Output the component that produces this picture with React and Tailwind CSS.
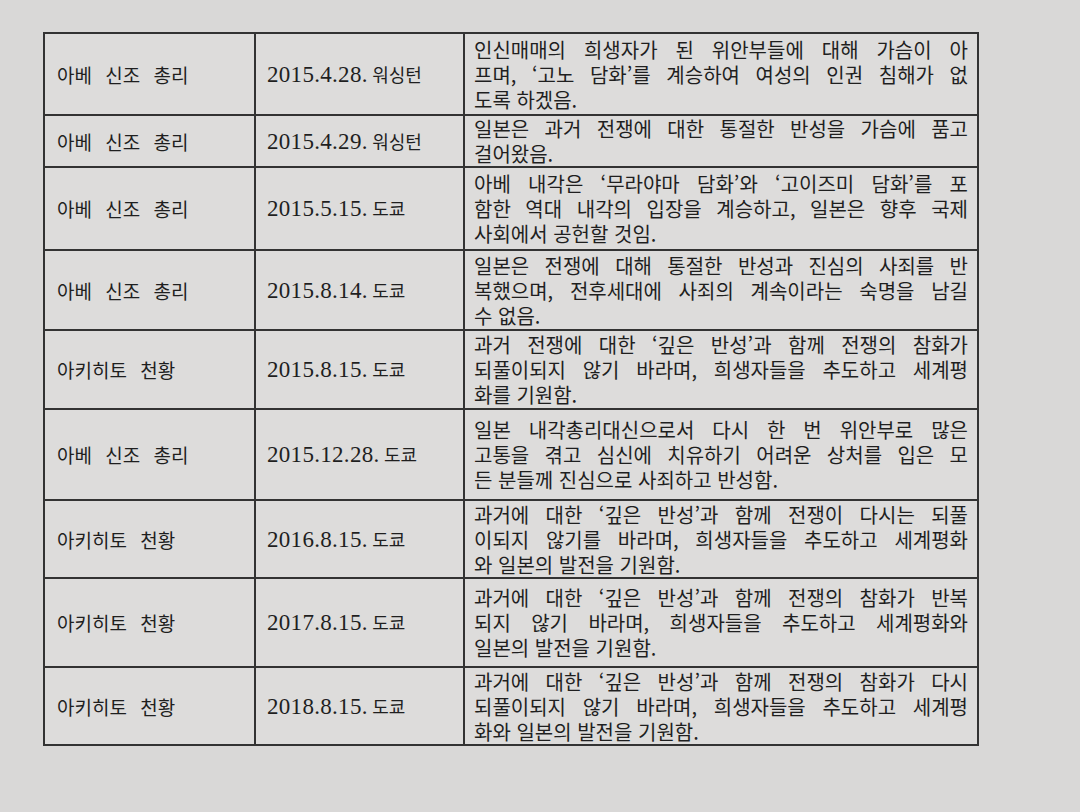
const rows = [
  {
    who: '아베 신조 총리',
    date: '2015.4.28.',
    place: '워싱턴',
    h: 'h-[82px]',
    lines: [
      '인신매매의 희생자가 된 위안부들에 대해 가슴이 아',
      '프며, ‘고노 담화’를 계승하여 여성의 인권 침해가 없',
      '도록 하겠음.',
    ],
  },
  {
    who: '아베 신조 총리',
    date: '2015.4.29.',
    place: '워싱턴',
    h: 'h-[52px]',
    lines: ['일본은 과거 전쟁에 대한 통절한 반성을 가슴에 품고', '걸어왔음.'],
  },
  {
    who: '아베 신조 총리',
    date: '2015.5.15.',
    place: '도쿄',
    h: 'h-[83px]',
    lines: [
      '아베 내각은 ‘무라야마 담화’와 ‘고이즈미 담화’를 포',
      '함한 역대 내각의 입장을 계승하고, 일본은 향후 국제',
      '사회에서 공헌할 것임.',
    ],
  },
  {
    who: '아베 신조 총리',
    date: '2015.8.14.',
    place: '도쿄',
    h: 'h-[80px]',
    lines: [
      '일본은 전쟁에 대해 통절한 반성과 진심의 사죄를 반',
      '복했으며, 전후세대에 사죄의 계속이라는 숙명을 남길',
      '수 없음.',
    ],
  },
  {
    who: '아키히토 천황',
    date: '2015.8.15.',
    place: '도쿄',
    h: 'h-[79px]',
    lines: [
      '과거 전쟁에 대한 ‘깊은 반성’과 함께 전쟁의 참화가',
      '되풀이되지 않기 바라며, 희생자들을 추도하고 세계평',
      '화를 기원함.',
    ],
  },
  {
    who: '아베 신조 총리',
    date: '2015.12.28.',
    place: '도쿄',
    h: 'h-[91px]',
    lines: [
      '일본 내각총리대신으로서 다시 한 번 위안부로 많은',
      '고통을 겪고 심신에 치유하기 어려운 상처를 입은 모',
      '든 분들께 진심으로 사죄하고 반성함.',
    ],
  },
  {
    who: '아키히토 천황',
    date: '2016.8.15.',
    place: '도쿄',
    h: 'h-[78px]',
    lines: [
      '과거에 대한 ‘깊은 반성’과 함께 전쟁이 다시는 되풀',
      '이되지 않기를 바라며, 희생자들을 추도하고 세계평화',
      '와 일본의 발전을 기원함.',
    ],
  },
  {
    who: '아키히토 천황',
    date: '2017.8.15.',
    place: '도쿄',
    h: 'h-[89px]',
    lines: [
      '과거에 대한 ‘깊은 반성’과 함께 전쟁의 참화가 반복',
      '되지 않기 바라며, 희생자들을 추도하고 세계평화와',
      '일본의 발전을 기원함.',
    ],
  },
  {
    who: '아키히토 천황',
    date: '2018.8.15.',
    place: '도쿄',
    h: 'h-[78px]',
    lines: [
      '과거에 대한 ‘깊은 반성’과 함께 전쟁의 참화가 다시',
      '되풀이되지 않기 바라며, 희생자들을 추도하고 세계평',
      '화와 일본의 발전을 기원함.',
    ],
  },
];

function App() {
  return (
    <div
      lang="ko"
      className="w-full h-[812px] overflow-hidden bg-[#d9d8d7] pt-[32px] pl-[43px] text-[#1f1f1f] font-['Noto_Sans_CJK_KR','Noto_Sans',sans-serif]"
    >
      <table className="table-fixed border-collapse w-[936px] bg-[#dddcdb]">
        <colgroup>
          <col className="w-[211px]" />
          <col className="w-[209px]" />
          <col />
        </colgroup>
        <tbody>
          {rows.map((r, i) => (
            <tr key={i} className={r.h}>
              <td className="border-2 border-[#333] align-middle pl-[12px] text-[19px] [word-spacing:8px] leading-none">
                {r.who}
              </td>
              <td className="border-2 border-[#333] align-middle pl-[11px] leading-none">
                <span className="font-['Liberation_Serif',serif] text-[23px] tracking-[0.3px]">{r.date}</span>{' '}
                <span className="text-[18px]">{r.place}</span>
              </td>
              <td className="border-2 border-[#333] align-middle px-[9px] text-[20px] leading-[25px]">
                {r.lines.map((l, j) => (
                  <div
                    key={j}
                    className={j < r.lines.length - 1 ? 'text-justify [text-align-last:justify]' : ''}
                  >
                    {l}
                  </div>
                ))}
              </td>
            </tr>
          ))}
        </tbody>
      </table>
    </div>
  );
}

export default App;
